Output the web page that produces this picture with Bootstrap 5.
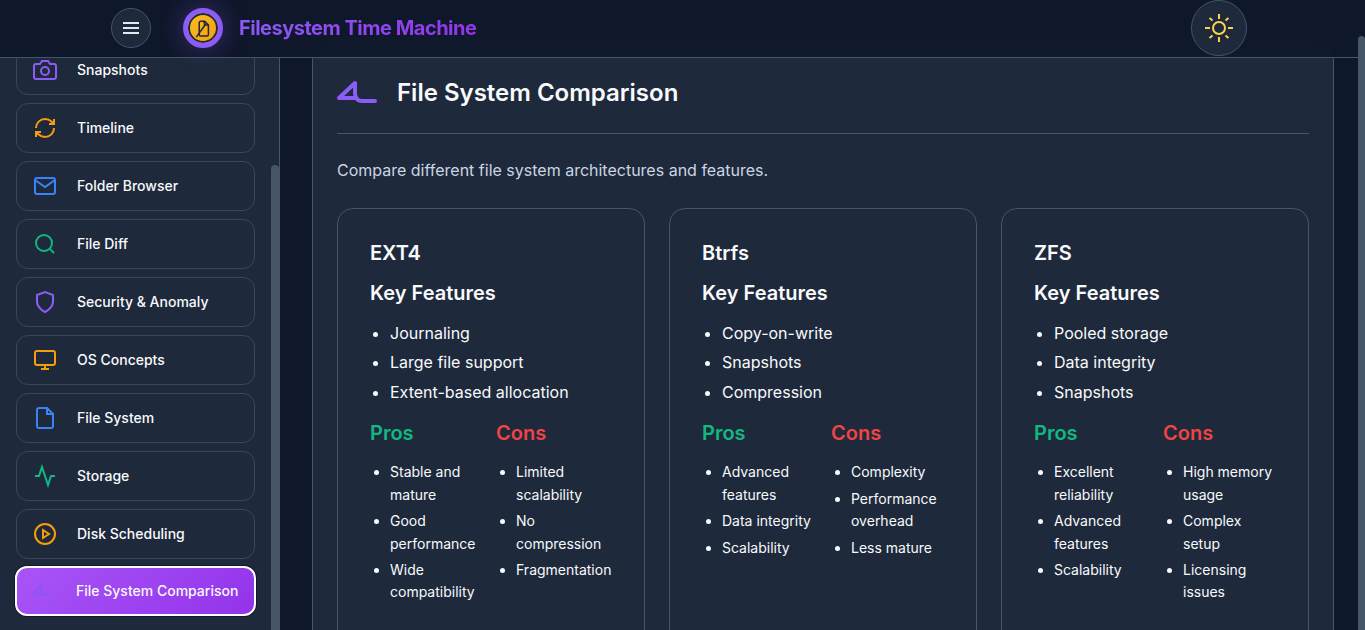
<!DOCTYPE html>
<html lang="en">
<head>
    <meta charset="UTF-8">
    <meta name="viewport" content="width=device-width, initial-scale=1.0">
    <title>Filesystem Time Machine</title>
    <link href="https://cdn.jsdelivr.net/npm/bootstrap@5.3.0/dist/css/bootstrap.min.css" rel="stylesheet">
    <style>
        html, body {
            height: 630px;
            overflow: hidden;
        }
        body {
            background: #0f172a;
            color: #f8fafc;
            font-family: Inter, "Liberation Sans", sans-serif;
            line-height: 1.6;
        }
        .app-shell {
            position: relative;
            height: 630px;
            overflow: hidden;
        }
        /* top bar sits over the scrolled page */
        .top-bar {
            position: absolute;
            top: 0;
            left: 0;
            right: 0;
            height: 58px;
            padding: 0 118px 1px 111px;
            background: rgba(15, 23, 42, 0.85);
            backdrop-filter: blur(10px);
            border-bottom: 1px solid #475569;
            z-index: 5;
        }
        .menu-btn {
            width: 40px;
            height: 40px;
            padding: 0;
            border-radius: 50%;
            background: #1e293b;
            border: 1px solid #475569;
            color: #f8fafc;
        }
        .logo-ring {
            width: 40px;
            height: 40px;
            margin-left: 32px;
            margin-right: 16px;
            border-radius: 50%;
            background: linear-gradient(135deg, #fbbf24, #f59e0b);
            border: 5px solid #8b5cf6;
            box-shadow: inset 0 0 0 2px #1e293b, 0 0 24px rgba(139, 92, 246, 0.35);
        }
        .logo-text {
            font-size: 20px;
            font-weight: 700;
            letter-spacing: -0.5px;
            line-height: 1.2;
            color: #9333ea;
            background: linear-gradient(135deg, #8b5cf6, #9333ea);
            -webkit-background-clip: text;
            background-clip: text;
            -webkit-text-fill-color: transparent;
        }
        .theme-btn {
            width: 56px;
            height: 56px;
            padding: 0;
            border-radius: 50%;
            background: #1e293b;
            border: 1px solid #475569;
        }
        .side-panel {
            position: relative;
            flex: 0 0 280px;
            height: 572px;
            margin-top: 58px;
            padding: 0 24px 0 16px;
            background: #1e293b;
            border-right: 1px solid #475569;
            overflow: hidden;
        }
        .side-stack {
            margin-top: -13px;
        }
        .side-item {
            height: 50px;
            flex: 0 0 50px;
            padding-left: 16px;
            border: 1px solid #3b4759;
            border-radius: 12px;
            color: #f8fafc;
            font-size: 14px;
            font-weight: 500;
            text-decoration: none;
        }
        .side-item svg {
            width: 24px;
            height: 24px;
            margin-right: 20px;
            flex: none;
        }
        .side-item.is-active {
            margin: -1px -1px 0;
            padding-left: 15px;
            background: linear-gradient(135deg, #a855f7, #9333ea);
            border: 2px solid #fff;
            box-shadow: 0 0 0 1px #0f172a;
        }
        .side-item.is-active svg {
            width: 20px;
            margin-right: 24px;
        }
        .side-thumb {
            position: absolute;
            top: 107px;
            bottom: 0;
            right: 0;
            width: 8px;
            background: #475569;
            border-radius: 4px 4px 0 0;
        }
        .page-thumb {
            position: absolute;
            top: 36px;
            bottom: 0;
            right: 0;
            width: 7px;
            background: #475569;
            border-radius: 4px 4px 0 0;
            z-index: 6;
        }
        .main-area {
            flex: 1;
            padding: 44px 31px 0 32px;
            min-width: 0;
        }
        .main-panel {
            height: 640px;
            padding: 29px 24px 0;
            background: #1e293b;
            border: 1px solid #475569;
            border-radius: 16px;
            overflow: hidden;
        }
        .panel-title {
            font-size: 24px;
            font-weight: 600;
            line-height: 1.6;
            margin: 0;
        }
        .panel-rule {
            margin: 21px 0 24px;
            border: 0;
            border-top: 1px solid #475569;
            opacity: 1;
        }
        .panel-intro {
            color: #cbd5e1;
            margin-bottom: 24px;
        }
        .fs-box {
            height: 480px;
            padding: 32px;
            border: 1px solid #475569;
            border-radius: 16px;
        }
        .fs-name, .fs-sub {
            font-size: 20px;
            font-weight: 600;
            line-height: 1.2;
            margin-bottom: 16px;
        }
        .fs-sub {
            margin-bottom: 15.7px;
        }
        .fs-list {
            padding-left: 20px;
            margin-bottom: 15.3px;
        }
        .fs-list li {
            margin-bottom: 4px;
        }
        .mini-list {
            font-size: 14px;
            padding-left: 20px;
            margin: 0;
        }
        .mini-list li {
            margin-bottom: 4px;
        }
        .pros-head, .cons-head {
            font-size: 20px;
            font-weight: 600;
            line-height: 1.2;
            margin-bottom: 16.7px;
        }
        .pros-head { color: #10b981; }
        .cons-head { color: #ef4444; }
        .pros-wide { flex: 0 0 110px; }
        .pros-norm { flex: 0 0 113px; }
    </style>
</head>
<body>
    <div class="app-shell d-flex">

        <!-- Top bar -->
        <header class="top-bar d-flex align-items-center justify-content-between">
            <div class="d-flex align-items-center">
                <button class="menu-btn d-flex align-items-center justify-content-center" type="button" aria-label="Menu">
                    <svg width="16" height="12" viewBox="0 0 16 12" fill="none" stroke="#e2e8f0" stroke-width="2"><path d="M0 1h16M0 6h16M0 11h16"/></svg>
                </button>
                <div class="logo-ring d-flex align-items-center justify-content-center">
                    <svg width="20" height="20" viewBox="0 0 24 24" fill="none" stroke="#1e293b" stroke-width="1.800"><path d="M14 4H9a1.500 1.500 0 0 0-1.500 1.500V20A1.500 1.500 0 0 0 9 21.500h8a1.500 1.500 0 0 0 1.500-1.500V8.500z"/><path d="M14 4v4.500h4.500"/><path d="M4 23 14 9l-.5-4.500"/></svg>
                </div>
                <span class="logo-text">Filesystem Time Machine</span>
            </div>
            <button class="theme-btn d-flex align-items-center justify-content-center" type="button" aria-label="Theme">
                <svg width="30" height="30" viewBox="0 0 30 30" fill="none" stroke="#fcd34d" stroke-width="2"><circle cx="15" cy="15" r="6"/><path d="M15 1v5M15 24v5M1 15h5M24 15h5M5.500 5 8.500 7.500M21.500 22.500l3 2.500M5.500 25l3-2.500M21.500 7.500l3-2.500"/></svg>
            </button>
        </header>

        <!-- Sidebar -->
        <aside class="side-panel">
            <div class="side-stack d-flex flex-column gap-2">
                <a class="side-item d-flex align-items-center" href="#">
                    <svg viewBox="0 0 24 24" fill="none" stroke="#8b5cf6" stroke-width="2"><path d="M23 19a2 2 0 0 1-2 2H3a2 2 0 0 1-2-2V8a2 2 0 0 1 2-2h4l2-3h6l2 3h4a2 2 0 0 1 2 2z"/><circle cx="12" cy="13" r="4"/></svg>
                    Snapshots
                </a>
                <a class="side-item d-flex align-items-center" href="#">
                    <svg viewBox="0 0 24 24" fill="none" stroke="#f59e0b" stroke-width="2"><path d="M3 12a9 9 0 0 1 9-9 9.750 9.750 0 0 1 6.740 2.740L21 8"/><path d="M21 3v5h-5"/><path d="M21 12a9 9 0 0 1-9 9 9.750 9.750 0 0 1-6.740-2.740L3 16"/><path d="M8 16H3v5"/></svg>
                    Timeline
                </a>
                <a class="side-item d-flex align-items-center" href="#">
                    <svg viewBox="0 0 24 24" fill="none" stroke="#3b82f6" stroke-width="2"><rect x="2" y="4" width="20" height="16" rx="2"/><path d="m22 6-10 7L2 6"/></svg>
                    Folder Browser
                </a>
                <a class="side-item d-flex align-items-center" href="#">
                    <svg viewBox="0 0 24 24" fill="none" stroke="#10b981" stroke-width="2"><circle cx="11" cy="11" r="8"/><path d="m21 21-4.350-4.350"/></svg>
                    File Diff
                </a>
                <a class="side-item d-flex align-items-center" href="#">
                    <svg viewBox="0 0 24 24" fill="none" stroke="#8b5cf6" stroke-width="2"><path d="M12 22s8-4 8-10V5l-8-3-8 3v7c0 6 8 10 8 10z"/></svg>
                    Security &amp; Anomaly
                </a>
                <a class="side-item d-flex align-items-center" href="#">
                    <svg viewBox="0 0 24 24" fill="none" stroke="#f59e0b" stroke-width="2"><rect x="2" y="3" width="20" height="14" rx="2"/><path d="M8 21h8M12 17v4"/></svg>
                    OS Concepts
                </a>
                <a class="side-item d-flex align-items-center" href="#">
                    <svg viewBox="0 0 24 24" fill="none" stroke="#3b82f6" stroke-width="2"><path d="M14 2H6a2 2 0 0 0-2 2v16a2 2 0 0 0 2 2h12a2 2 0 0 0 2-2V8z"/><path d="M14 2v6h6"/></svg>
                    File System
                </a>
                <a class="side-item d-flex align-items-center" href="#">
                    <svg viewBox="0 0 24 24" fill="none" stroke="#10b981" stroke-width="2"><path d="M22 12h-4l-3 9L9 3l-3 9H2"/></svg>
                    Storage
                </a>
                <a class="side-item d-flex align-items-center" href="#">
                    <svg viewBox="0 0 24 24" fill="none" stroke="#f59e0b" stroke-width="2"><circle cx="12" cy="12" r="10"/><path d="m10 8 6 4-6 4z"/></svg>
                    Disk Scheduling
                </a>
                <a class="side-item is-active d-flex align-items-center" href="#">
                    <svg viewBox="0 0 40 24" fill="none" stroke="#7c5cf2" stroke-width="2.500"><path d="M39 20H25q-6 0-7-7V1L2 17h16"/></svg>
                    File System Comparison
                </a>
            </div>
            <div class="side-thumb"></div>
        </aside>

        <!-- Main content -->
        <main class="main-area">
            <div class="main-panel">
                <div class="d-flex align-items-center">
                    <svg class="me-3" width="40" height="24" viewBox="0 0 40 24" fill="none" stroke="#8b5cf6" stroke-width="4" stroke-linecap="round" stroke-linejoin="round"><path d="M38 20H25q-6 0-7-7V2L2 17h16"/></svg>
                    <h2 class="panel-title ms-1">File System Comparison</h2>
                </div>
                <hr class="panel-rule">
                <p class="panel-intro">Compare different file system architectures and features.</p>

                <div class="row g-4">
                    <div class="col-4">
                        <div class="fs-box">
                            <h3 class="fs-name">EXT4</h3>
                            <h4 class="fs-sub">Key Features</h4>
                            <ul class="fs-list">
                                <li>Journaling</li>
                                <li>Large file support</li>
                                <li>Extent-based allocation</li>
                            </ul>
                            <div class="d-flex gap-3">
                                <div class="pros-wide">
                                    <h5 class="pros-head">Pros</h5>
                                    <ul class="mini-list">
                                        <li>Stable and mature</li>
                                        <li>Good performance</li>
                                        <li>Wide compatibility</li>
                                    </ul>
                                </div>
                                <div class="flex-fill">
                                    <h5 class="cons-head">Cons</h5>
                                    <ul class="mini-list">
                                        <li>Limited scalability</li>
                                        <li>No compression</li>
                                        <li>Fragmentation</li>
                                    </ul>
                                </div>
                            </div>
                        </div>
                    </div>
                    <div class="col-4">
                        <div class="fs-box">
                            <h3 class="fs-name">Btrfs</h3>
                            <h4 class="fs-sub">Key Features</h4>
                            <ul class="fs-list">
                                <li>Copy-on-write</li>
                                <li>Snapshots</li>
                                <li>Compression</li>
                            </ul>
                            <div class="d-flex gap-3">
                                <div class="pros-norm">
                                    <h5 class="pros-head">Pros</h5>
                                    <ul class="mini-list">
                                        <li>Advanced features</li>
                                        <li>Data integrity</li>
                                        <li>Scalability</li>
                                    </ul>
                                </div>
                                <div class="flex-fill">
                                    <h5 class="cons-head">Cons</h5>
                                    <ul class="mini-list">
                                        <li>Complexity</li>
                                        <li>Performance overhead</li>
                                        <li>Less mature</li>
                                    </ul>
                                </div>
                            </div>
                        </div>
                    </div>
                    <div class="col-4">
                        <div class="fs-box">
                            <h3 class="fs-name">ZFS</h3>
                            <h4 class="fs-sub">Key Features</h4>
                            <ul class="fs-list">
                                <li>Pooled storage</li>
                                <li>Data integrity</li>
                                <li>Snapshots</li>
                            </ul>
                            <div class="d-flex gap-3">
                                <div class="pros-norm">
                                    <h5 class="pros-head">Pros</h5>
                                    <ul class="mini-list">
                                        <li>Excellent reliability</li>
                                        <li>Advanced features</li>
                                        <li>Scalability</li>
                                    </ul>
                                </div>
                                <div class="flex-fill">
                                    <h5 class="cons-head">Cons</h5>
                                    <ul class="mini-list">
                                        <li>High memory usage</li>
                                        <li>Complex setup</li>
                                        <li>Licensing issues</li>
                                    </ul>
                                </div>
                            </div>
                        </div>
                    </div>
                </div>
            </div>
        </main>

        <div class="page-thumb"></div>
    </div>

    <script src="https://cdn.jsdelivr.net/npm/bootstrap@5.3.0/dist/js/bootstrap.bundle.min.js"></script>
</body>
</html>
